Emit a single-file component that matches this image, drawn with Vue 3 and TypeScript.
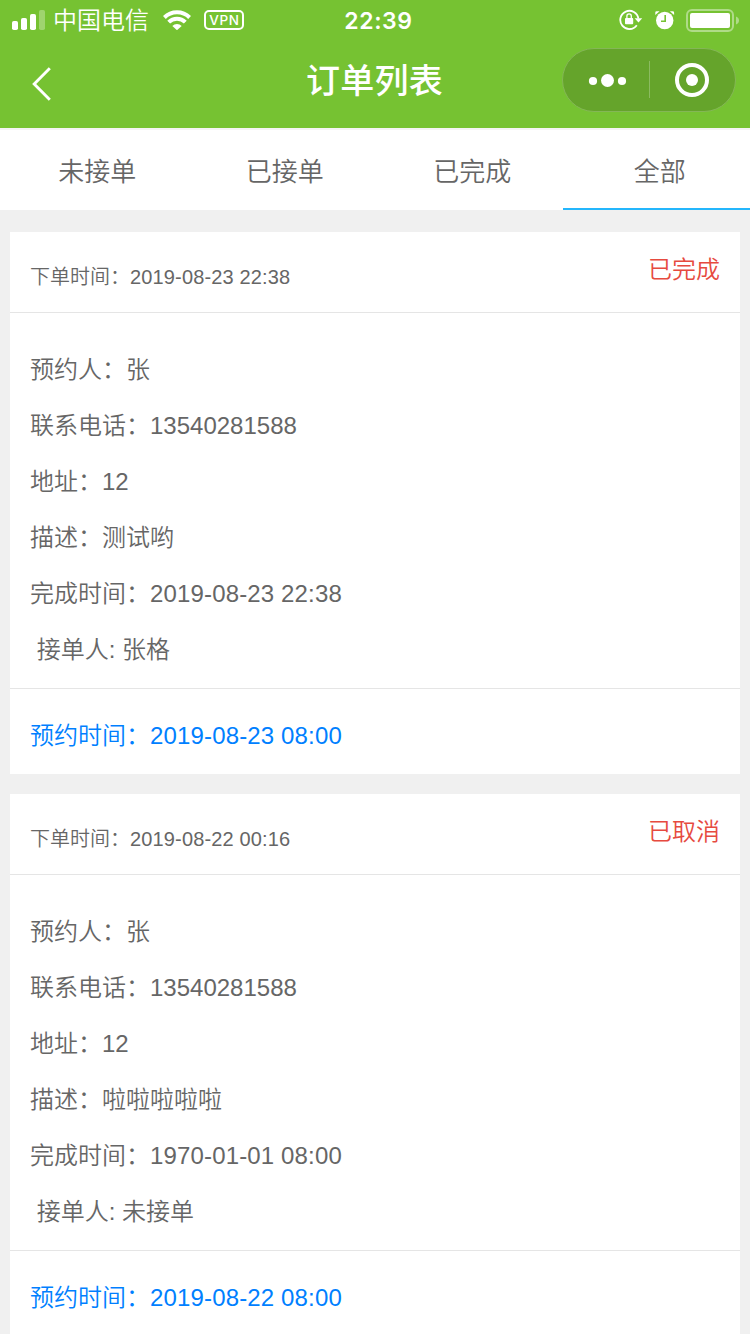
<script setup lang="ts">
interface Field {
  label: string
  value: string
  kind?: 'date' | 'indent'
}

interface Order {
  createdAt: string
  status: string
  fields: Field[]
  bookedFor: string
}

const tabs: string[] = ['未接单', '已接单', '已完成', '全部']
const activeTab = 3

const orders: Order[] = [
  {
    createdAt: '2019-08-23 22:38',
    status: '已完成',
    fields: [
      { label: '预约人：', value: '张' },
      { label: '联系电话：', value: '13540281588' },
      { label: '地址：', value: '12' },
      { label: '描述：', value: '测试哟' },
      { label: '完成时间：', value: '2019-08-23 22:38', kind: 'date' },
      { label: '接单人: ', value: '张格', kind: 'indent' },
    ],
    bookedFor: '2019-08-23 08:00',
  },
  {
    createdAt: '2019-08-22 00:16',
    status: '已取消',
    fields: [
      { label: '预约人：', value: '张' },
      { label: '联系电话：', value: '13540281588' },
      { label: '地址：', value: '12' },
      { label: '描述：', value: '啦啦啦啦啦' },
      { label: '完成时间：', value: '1970-01-01 08:00', kind: 'date' },
      { label: '接单人: ', value: '未接单', kind: 'indent' },
    ],
    bookedFor: '2019-08-22 08:00',
  },
]
</script>

<template>
  <div class="screen">
    <header class="top">
      <div class="status-bar">
        <div class="status-left">
          <svg class="signal" width="34" height="20" viewBox="0 0 34 20" fill="#fff">
            <rect x="0" y="11" width="6" height="9" rx="1.8" />
            <rect x="9" y="8" width="6" height="12" rx="1.8" />
            <rect x="18" y="4" width="6" height="16" rx="1.8" />
            <rect x="27" y="0" width="6" height="20" rx="1.8" opacity=".3" />
          </svg>
          <span class="carrier">中国电信</span>
          <svg class="wifi" width="28" height="20" viewBox="0 0 28 20">
            <g fill="none" stroke="#fff" stroke-width="4">
              <path d="M1.400 7.500a17.800 17.800 0 0 1 25.200 0" />
              <path d="M5.700 12.200a11.700 11.700 0 0 1 16.600 0" />
            </g>
            <path d="M9.300 16a6.600 6.600 0 0 1 9.400 0L14 20.200z" fill="#fff" />
          </svg>
          <span class="vpn">VPN</span>
        </div>
        <span class="clock">22:39</span>
        <div class="status-right">
          <svg class="lock" width="24" height="22" viewBox="0 0 24 22">
            <path d="M17.800 16.200A9.100 9.100 0 1 1 19.400 9.700" fill="none" stroke="#fff" stroke-width="1.800" />
            <path d="M15.600 9.200h7.600L19.500 13.600z" fill="#fff" />
            <rect x="6" y="9" width="8.200" height="6.200" rx=".9" fill="#fff" />
            <path d="M7.900 9.600V7a2.200 2.200 0 0 1 4.400 0v2.600" fill="none" stroke="#fff" stroke-width="1.300" />
          </svg>
          <svg class="alarm" width="20" height="20" viewBox="0 0 20 20">
            <circle cx="9.700" cy="10.500" r="8.700" fill="#fff" />
            <path d="M.3 5V2.600Q.3 1.200 1.700 1.200H4.600ZM19.100 5V2.600Q19.100 1.200 17.700 1.200H14.800Z" fill="#fff" />
            <path d="M10.200 5v6.300H6" fill="none" stroke="#76c232" stroke-width="1.600" />
          </svg>
          <svg class="battery" width="54" height="24" viewBox="0 0 54 24">
            <rect x="1" y="1" width="46" height="21" rx="5" fill="none" stroke="#fff" stroke-width="2" opacity=".42" />
            <rect x="4" y="4" width="40" height="15" rx="2" fill="#fff" />
            <path d="M50 7.500q3 1.200 3 4t-3 4z" fill="#fff" opacity=".42" />
          </svg>
        </div>
      </div>
      <div class="nav">
        <svg class="back" width="22" height="36" viewBox="0 0 22 36">
          <path d="M18.800 2.200 3.200 18l15.600 15.800" fill="none" stroke="#fff" stroke-width="2.900" />
        </svg>
        <h1 class="title">订单列表</h1>
        <svg class="capsule" width="174" height="64" viewBox="0 0 174 64">
          <rect x=".5" y=".5" width="173" height="63" rx="31.500" fill="#65a42b" stroke="#84b756" />
          <path d="M87.500 13v37" stroke="#8bbb60" />
          <g fill="#fff">
            <circle cx="31" cy="33" r="4.100" />
            <circle cx="45.500" cy="32.500" r="6.500" />
            <circle cx="60" cy="33" r="4.100" />
            <circle cx="130" cy="32" r="6" />
          </g>
          <circle cx="130" cy="32" r="15" fill="none" stroke="#fff" stroke-width="4" />
        </svg>
      </div>
    </header>

    <nav class="tabs">
      <span v-for="(tab, i) in tabs" :key="tab" class="tab" :class="{ active: i === activeTab }">{{ tab }}</span>
    </nav>

    <main class="list">
      <section v-for="order in orders" :key="order.createdAt" class="card">
        <div class="card-head">
          <span class="created">下单时间：<span class="date">{{ order.createdAt }}</span></span>
          <span class="state">{{ order.status }}</span>
        </div>
        <div class="card-body">
          <p v-for="field in order.fields" :key="field.label" class="row" :class="{ indent: field.kind === 'indent' }">{{ field.label }}<span :class="{ date: field.kind === 'date' }">{{ field.value }}</span></p>
        </div>
        <div class="card-foot">预约时间：<span class="date">{{ order.bookedFor }}</span></div>
      </section>
    </main>
  </div>
</template>

<style>
body {
  margin: 0;
  background: #f0f0f0;
}
</style>

<style scoped>
.screen {
  width: 750px;
  height: 1334px;
  overflow: hidden;
  background: #f0f0f0;
  color: #666;
  font-family: "Liberation Sans", "Noto Sans CJK SC", sans-serif;
  font-weight: 350;
}
.top {
  height: 128px;
  background: #76c232;
  color: #fff;
}
.status-bar {
  display: grid;
  grid-template-columns: 1fr auto 1fr;
  grid-template-rows: 40px;
  align-items: center;
  height: 40px;
  padding: 0 10px 0 12px;
}
.status-left,
.status-right {
  display: flex;
  align-items: center;
}
.status-right {
  justify-content: flex-end;
  padding-top: 2px;
}
.carrier {
  margin-left: 7px;
  padding-top: 2px;
  font-size: 24px;
  line-height: 38px;
}
.wifi {
  margin-left: 14px;
}
.vpn {
  box-sizing: border-box;
  width: 40px;
  height: 20px;
  margin-left: 13px;
  border: 2px solid #fff;
  border-radius: 5px;
  font: 500 13.5px/16px Inter, sans-serif;
  letter-spacing: 0.7px;
  text-align: center;
  text-indent: 1px;
}
.clock {
  padding: 2px 0 0 5px;
  font: 600 23px/38px Inter, sans-serif;
  letter-spacing: 0.6px;
}
.lock,
.alarm {
  margin-bottom: 2px;
}
.alarm {
  margin-left: 12px;
}
.battery {
  margin-left: 11px;
}
.nav {
  display: grid;
  grid-template-columns: 200px 1fr 200px;
  align-items: center;
  height: 80px;
  padding: 0 14px 0 13px;
}
.back {
  margin: 8px 0 0 18px;
}
.title {
  margin: 0;
  padding-top: 2px;
  font-size: 34px;
  font-weight: 500;
  line-height: 78px;
  letter-spacing: 0.3px;
  text-align: center;
}
.capsule {
  justify-self: end;
}
.tabs {
  display: flex;
  height: 80px;
  border-top: 2px solid #f4f4f4;
  background: #fff;
}
.tab {
  box-sizing: border-box;
  flex: 1;
  height: 80px;
  padding-left: 7px;
  font-size: 26px;
  line-height: 84px;
  text-align: center;
}
.tab.active {
  border-bottom: 2px solid #24b6fc;
}
.list {
  display: flex;
  flex-direction: column;
  gap: 20px;
  padding: 22px 10px 0;
}
.card {
  background: #fff;
}
.card-head {
  display: flex;
  justify-content: space-between;
  height: 80px;
  padding: 0 20px;
  border-bottom: 1px solid #e5e5e5;
}
.date {
  letter-spacing: 0.15px;
}
.created {
  font-size: 20px;
  line-height: 90px;
}
.state {
  color: #e64a3f;
  font-size: 24px;
  line-height: 76px;
}
.card-body {
  padding: 29px 20px 10px;
  border-bottom: 1px solid #e5e5e5;
}
.row {
  margin: 0;
  font-size: 24px;
  line-height: 56px;
  white-space: pre;
}
.row.indent {
  padding-left: 6.67px;
}
.card-foot {
  box-sizing: border-box;
  height: 85px;
  padding: 9px 20px 0;
  color: #007fff;
  font-size: 24px;
  line-height: 76px;
}
</style>
